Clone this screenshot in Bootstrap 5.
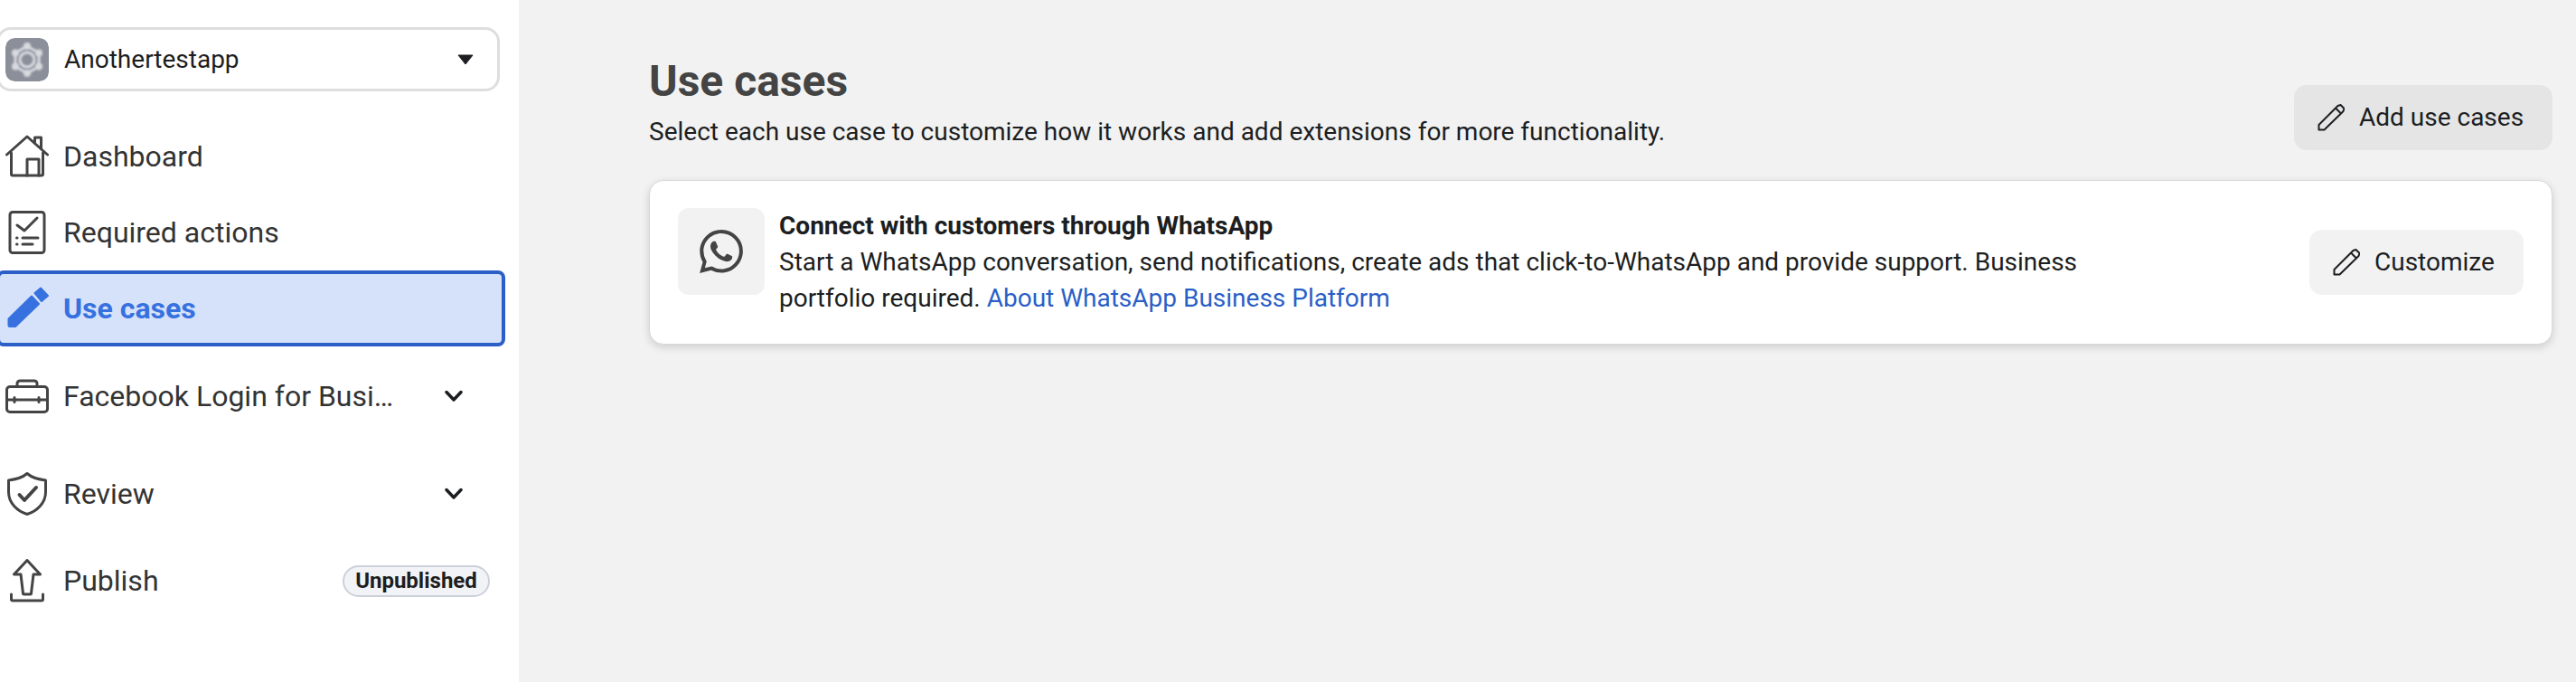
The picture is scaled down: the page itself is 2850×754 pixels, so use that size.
<!DOCTYPE html>
<html lang="en">
  <head>
    <meta charset="UTF-8" />
    <meta name="viewport" content="width=device-width, initial-scale=1.0" />
    <title>Use cases</title>
    <link href="https://cdn.jsdelivr.net/npm/bootstrap@5.3.3/dist/css/bootstrap.min.css" rel="stylesheet" />
    <style>
      body { font-family: Roboto, "Liberation Sans", sans-serif; color: #1c1e21; background: #f2f2f2; overflow: hidden; }
      .page-wrap { height: 754px; }
      .side-col { width: 574px; background: #fff; padding-top: 30px; overflow: hidden; flex-shrink: 0; }
      .app-picker { width: 557px; height: 71px; margin-left: -4px; padding: 0 26px 0 7px; border: 3px solid #dedede; border-radius: 16px; font-size: 28px; gap: 17px; }
      .app-logo { width: 48px; height: 48px; border-radius: 10px; flex-shrink: 0; }
      .caret-down { margin-left: auto; }
      .side-row { width: 563px; height: 84px; margin-left: -4px; padding: 0 13px 0 6px; border: 4px solid transparent; border-radius: 8px; font-size: 32px; color: #333; gap: 16px; text-decoration: none; }
      .first-row { margin-top: 30px; }
      .group-row { margin-top: 13px; }
      .review-row { margin-top: 24px; }
      .publish-row { margin-top: 12px; }
      .side-row.active-row { background: #d6e2f9; border-color: #2b5fc7; color: #3771e0; font-weight: 700; height: 84px; }
      .row-icon { width: 48px; height: 48px; flex-shrink: 0; fill: none; stroke: #444; stroke-width: 3; stroke-linecap: round; stroke-linejoin: round; }
      .row-label { white-space: nowrap; }
      .row-chevron { margin-left: auto; margin-right: 30px; flex-shrink: 0; }
      .status-pill { margin-left: auto; width: 163px; height: 35px; padding: 0; font-size: 24px; font-weight: 700; line-height: 31px; color: #1c1e21; background: #f1f3f7; border: 2px solid #ccd0d9; }
      .main-col { padding: 0 26px 0 144px; }
      .page-title { font-size: 48px; font-weight: 700; color: #444; line-height: 56px; margin: 62px 0 0; }
      .page-sub { font-size: 28px; line-height: 40px; color: #1c1e21; margin: 8px 0 0; }
      .plain-btn { height: 72px; border: 0; border-radius: 14px; font-size: 28px; color: #1c1e21; padding: 0 0 0 26px; gap: 16px; }
      .add-btn { width: 286px; background: #e5e5e5; margin-top: 94px; }
      .edit-btn { width: 237px; background: #f2f2f2; }
      .plain-btn:hover { color: #1c1e21; }
      .plain-btn svg { width: 30px; height: 30px; flex-shrink: 0; fill: none; stroke: #1c1e21; stroke-width: 2; stroke-linejoin: round; }
      .usecase-card { height: 182px; margin-top: 33px; border: 1px solid #d8d8d8; border-radius: 16px; box-shadow: 0 3px 10px rgba(0,0,0,.15); padding: 0 31px; }
      .wa-tile { width: 96px; height: 96px; margin-top: -24px; background: #f2f2f2; border-radius: 12px; flex-shrink: 0; }
      .card-copy { width: 1470px; margin-left: 16px; font-size: 28px; line-height: 40px; }
      .card-copy a { color: #2b5fc7; text-decoration: none; }
      .card-head { font-weight: 700; }
    </style>
  </head>

  <body>
    <div class="page-wrap d-flex">
      <div class="side-col">
        <div class="app-picker d-flex align-items-center">
          <svg class="app-logo" viewBox="0 0 48 48">
            <defs><filter id="soft"><feGaussianBlur stdDeviation="0.8" /></filter></defs>
            <rect width="48" height="48" rx="10" fill="#8b8f9a" />
            <g filter="url(#soft)">
              <g fill="none" stroke="#e4e6ea" stroke-width="3" opacity=".9">
                <path d="M24 9l13 7.500v15L24 39l-13-7.500v-15z" />
                <circle cx="24" cy="24" r="8" />
              </g>
              <g fill="#d8dade">
                <circle cx="24" cy="9" r="4" /><circle cx="37" cy="16.500" r="4" /><circle cx="37" cy="31.500" r="4" />
                <circle cx="24" cy="39" r="4" /><circle cx="11" cy="31.500" r="4" /><circle cx="11" cy="16.500" r="4" />
              </g>
            </g>
          </svg>
          <span>Anothertestapp</span>
          <svg class="caret-down" width="18" height="12" viewBox="0 0 18 12"><path d="M1 1h16L9 11z" fill="#1c1e21" stroke="#1c1e21" stroke-linejoin="round" /></svg>
        </div>

        <a class="side-row first-row d-flex align-items-center" href="#">
          <svg class="row-icon" viewBox="0 0 48 48">
            <path d="M1.500 22L24 2l22.500 20" />
            <path d="M6.500 20v23.500a1.500 1.500 0 0 0 1.500 1.500h32a1.500 1.500 0 0 0 1.500-1.500V20" />
            <path d="M24 45V27h13v18" />
            <path d="M32.500 8V3h7v12" />
          </svg>
          <span class="row-label">Dashboard</span>
        </a>
        <a class="side-row d-flex align-items-center" href="#">
          <svg class="row-icon" viewBox="0 0 48 48">
            <rect x="5" y="1.500" width="38" height="45" rx="3" />
            <path d="M13 16l8 6 14-14" />
            <path d="M19 30h17M19 37h11" />
            <path d="M12.500 30h.5M12.500 37h.5" />
          </svg>
          <span class="row-label">Required actions</span>
        </a>
        <a class="side-row active-row d-flex align-items-center" href="#">
          <svg class="row-icon" viewBox="0 0 48 48">
            <path d="M3.500 35.500L29 10.500l8 8.500-26 25H5a1.500 1.500 0 0 1-1.500-1.500z" fill="#3771e0" stroke="#3771e0" stroke-width="2" />
            <path d="M32.500 7L39 1.500l8 8.500-7 6z" fill="#3771e0" stroke="#3771e0" stroke-width="2" />
          </svg>
          <span class="row-label">Use cases</span>
        </a>
        <a class="side-row group-row d-flex align-items-center" href="#">
          <svg class="row-icon" viewBox="0 0 48 48">
            <rect x="1.500" y="13.500" width="45" height="28" rx="3.500" />
            <path d="M13 13v-3a3 3 0 0 1 3-3h16a3 3 0 0 1 3 3v3" />
            <path d="M2 28h44" />
            <path d="M10 25.500v5M37 25.500v5" />
          </svg>
          <span class="row-label">Facebook Login for Busi…</span>
          <svg class="row-chevron" width="20" height="14" viewBox="0 0 20 14"><path d="M2 2.500l8 8.500 8-8.500" fill="none" stroke="#1c1e21" stroke-width="3.500" stroke-linecap="round" stroke-linejoin="round" /></svg>
        </a>
        <a class="side-row review-row d-flex align-items-center" href="#">
          <svg class="row-icon" viewBox="0 0 48 48">
            <path d="M24 1.500c4 3.500 12 6.500 20.500 7.500v13c0 12-9.500 21-20.500 24.500C13 43 3.500 34 3.500 22V9C12 8 20 5 24 1.500z" />
            <path d="M15.500 25l5.500 6 13-14" stroke-width="4" />
          </svg>
          <span class="row-label">Review</span>
          <svg class="row-chevron" width="20" height="14" viewBox="0 0 20 14"><path d="M2 2.500l8 8.500 8-8.500" fill="none" stroke="#1c1e21" stroke-width="3.500" stroke-linecap="round" stroke-linejoin="round" /></svg>
        </a>
        <a class="side-row publish-row d-flex align-items-center" href="#">
          <svg class="row-icon" viewBox="0 0 48 48">
            <path d="M24 1.500L9.500 17H17l2.500 21a1 1 0 0 0 1 1h7a1 1 0 0 0 1-1L31 17h7.500z" />
            <path d="M6.500 39v5.500a1.500 1.500 0 0 0 1.500 1.500h32a1.500 1.500 0 0 0 1.500-1.500V39" />
          </svg>
          <span class="row-label">Publish</span>
          <span class="badge rounded-pill status-pill">Unpublished</span>
        </a>
      </div>

      <div class="main-col flex-grow-1">
        <div class="d-flex justify-content-between align-items-start">
          <div>
            <h1 class="page-title">Use cases</h1>
            <p class="page-sub">Select each use case to customize how it works and add extensions for more functionality.</p>
          </div>
          <button class="btn plain-btn add-btn d-flex align-items-center" type="button">
            <svg viewBox="0 0 30 30"><path d="M1.500 23L20 4.500l6 6L7.500 28.500h-6zM22.500 2l3-1 4 4-1 3-2.500 2.500-6-6z" /></svg>
            <span>Add use cases</span>
          </button>
        </div>

        <div class="card usecase-card flex-row align-items-center justify-content-between">
          <div class="d-flex align-items-center">
            <div class="wa-tile d-flex align-items-center justify-content-center">
              <svg width="48" height="48" viewBox="0 0 24 24" fill="#444"><path d="M17.472 14.382c-.297-.149-1.758-.867-2.030-.967-.273-.099-.471-.148-.670.150-.197.297-.767.966-.940 1.164-.173.199-.347.223-.644.075-.297-.150-1.255-.463-2.390-1.475-.883-.788-1.480-1.761-1.653-2.059-.173-.297-.018-.458.130-.606.134-.133.298-.347.446-.520.149-.174.198-.298.298-.497.099-.198.050-.371-.025-.520-.075-.149-.669-1.612-.916-2.207-.242-.579-.487-.500-.669-.510-.173-.008-.371-.010-.570-.010-.198 0-.520.074-.792.372-.272.297-1.040 1.016-1.040 2.479 0 1.462 1.065 2.875 1.213 3.074.149.198 2.096 3.200 5.077 4.487.709.306 1.262.489 1.694.625.712.227 1.360.195 1.871.118.571-.085 1.758-.719 2.006-1.413.248-.694.248-1.289.173-1.413-.074-.124-.272-.198-.570-.347m-5.421 7.403h-.004a9.870 9.870 0 01-5.031-1.378l-.361-.214-3.741.982.998-3.648-.235-.374a9.860 9.860 0 01-1.510-5.260c.001-5.450 4.436-9.884 9.888-9.884 2.640 0 5.122 1.030 6.988 2.898a9.825 9.825 0 012.893 6.994c-.003 5.450-4.437 9.884-9.885 9.884m8.413-18.297A11.815 11.815 0 0012.050 0C5.495 0 .160 5.335.157 11.892c0 2.096.547 4.142 1.588 5.945L.057 24l6.305-1.654a11.882 11.882 0 005.683 1.448h.005c6.554 0 11.890-5.335 11.893-11.893a11.821 11.821 0 00-3.480-8.413z" /></svg>
            </div>
            <div class="card-copy">
              <div class="card-head">Connect with customers through WhatsApp</div>
              <div>Start a WhatsApp conversation, send notifications, create ads that click-to-WhatsApp and provide support. Business portfolio required. <a href="#">About WhatsApp Business Platform</a></div>
            </div>
          </div>
          <button class="btn plain-btn edit-btn d-flex align-items-center" type="button">
            <svg viewBox="0 0 30 30"><path d="M1.500 23L20 4.500l6 6L7.500 28.500h-6zM22.500 2l3-1 4 4-1 3-2.500 2.500-6-6z" /></svg>
            <span>Customize</span>
          </button>
        </div>
      </div>
    </div>

    <script src="https://cdn.jsdelivr.net/npm/bootstrap@5.3.3/dist/js/bootstrap.bundle.min.js"></script>
  </body>
</html>
